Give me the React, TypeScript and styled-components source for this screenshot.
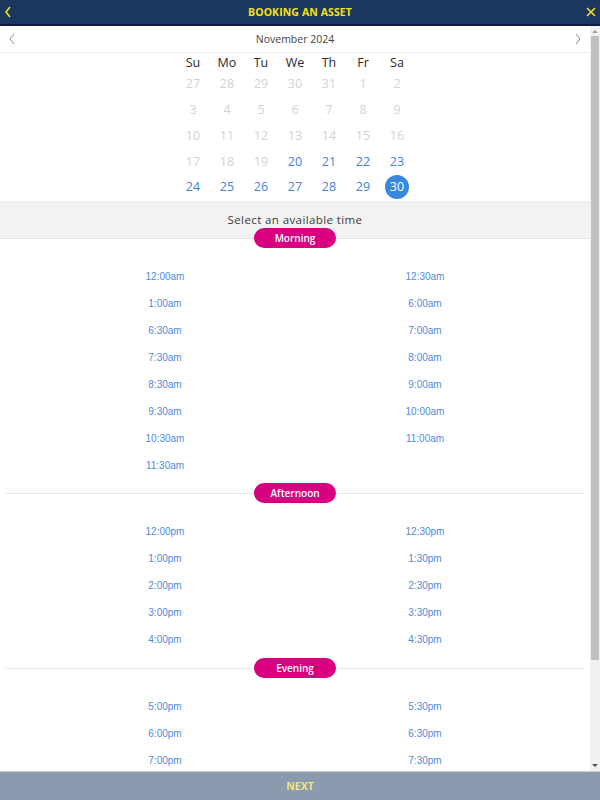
import styled, { createGlobalStyle } from "styled-components";

const GlobalStyle = createGlobalStyle`
  html, body {
    margin: 0;
    padding: 0;
    height: 100%;
  }
  body {
    font-family: "Open Sans", sans-serif;
    background: #ffffff;
  }
  #root {
    height: 100%;
  }
`;

const Page = styled.div`
  height: 100vh;
  display: flex;
  flex-direction: column;
  overflow: hidden;
`;

const Header = styled.div`
  height: 24px;
  flex-shrink: 0;
  background: #1b365f;
  border-bottom: 2px solid #0c1a48;
  display: grid;
  grid-template-columns: 24px 1fr 24px;
  align-items: center;
  padding: 0 4px;
`;

const HeaderTitle = styled.div`
  text-align: center;
  color: #f5e21c;
  font-weight: 700;
  font-size: 10.5px;
  letter-spacing: 0.1px;
`;

const IconButton = styled.div<{ $align?: string }>`
  display: flex;
  align-items: center;
  justify-content: ${(p) => p.$align || "flex-start"};
  height: 100%;
`;

const Main = styled.div`
  flex: 1;
  min-height: 0;
  display: flex;
`;

const Body = styled.div`
  flex: 1;
  overflow-y: auto;
  scrollbar-width: none;
`;

const ScrollTrack = styled.div`
  width: 10px;
  flex-shrink: 0;
  background: #f1f1f1;
  display: flex;
  flex-direction: column;
`;

const ScrollButton = styled.div`
  height: 10px;
  display: flex;
  align-items: center;
  justify-content: center;
`;

const ScrollRail = styled.div`
  flex: 1;
  display: flex;
  flex-direction: column;
`;

const ScrollThumb = styled.div`
  height: 86%;
  margin: 0 1px;
  background: #c1c1c1;
`;

const MonthBar = styled.div`
  height: 26px;
  border-bottom: 1px solid #eceff0;
  display: flex;
  align-items: center;
  justify-content: space-between;
  padding: 0 8px;
`;

const MonthLabel = styled.div`
  font-size: 10.5px;
  color: #444444;
`;

const CalendarGrid = styled.div`
  width: 238px;
  margin: 0 auto;
  padding-bottom: 1px;
  display: grid;
  grid-template-columns: repeat(7, 34px);
  grid-template-rows: 18px repeat(5, 25.75px);
  align-items: center;
  justify-items: center;
`;

const DayName = styled.div`
  font-size: 12.5px;
  color: #2a2a2a;
`;

const DayCell = styled.div<{ $state: "off" | "on" | "selected" }>`
  width: 24px;
  height: 24px;
  border-radius: 50%;
  display: flex;
  align-items: center;
  justify-content: center;
  font-size: 12.5px;
  color: ${(p) =>
    p.$state === "off" ? "#cfd3d7" : p.$state === "on" ? "#4282d8" : "#ffffff"};
  background: ${(p) => (p.$state === "selected" ? "#3a87e0" : "transparent")};
`;

const Band = styled.div`
  height: 37px;
  background: #f2f2f2;
  border-bottom: 1px solid #e3e3e3;
  display: flex;
  align-items: center;
  justify-content: center;
  font-size: 11.5px;
  letter-spacing: 0.4px;
  color: #3a3a3a;
`;

const PillRow = styled.div`
  position: relative;
  margin-top: -11px;
  height: 20px;
  display: flex;
  justify-content: center;
`;

const Divider = styled.div`
  position: relative;
  height: 20px;
  display: flex;
  justify-content: center;
  &::before {
    content: "";
    position: absolute;
    left: 6px;
    right: 6px;
    top: 50%;
    height: 1px;
    background: #e6e9ec;
  }
`;

const Pill = styled.div`
  position: relative;
  z-index: 1;
  width: 82px;
  height: 20px;
  border-radius: 10px;
  background: #d9007f;
  color: #ffffff;
  font-size: 10px;
  font-weight: 600;
  display: flex;
  align-items: center;
  justify-content: center;
`;

const TimeGrid = styled.div`
  display: grid;
  grid-template-columns: 1fr 1fr;
  grid-auto-rows: 27px;
  padding: 15px 35px 4.5px;
  align-items: center;
  justify-items: center;
`;

const TimeSlot = styled.div`
  font-family: "Liberation Sans", Arial, sans-serif;
  font-size: 10px;
  color: #4f8adf;
  cursor: pointer;
`;

const Footer = styled.div`
  height: 28px;
  flex-shrink: 0;
  background: #8a9bb0;
  border-top: 1px solid #c9d0d9;
  display: flex;
  align-items: center;
  justify-content: center;
  color: #f3e57a;
  font-weight: 700;
  font-size: 10.5px;
`;

const Chevron = ({ dir, color, w = 1.4 }: { dir: "left" | "right"; color: string; w?: number }) => (
  <svg width="8" height="12" viewBox="0 0 8 12">
    <path
      d={dir === "left" ? "M6 1 L2 6 L6 11" : "M2 1 L6 6 L2 11"}
      fill="none"
      stroke={color}
      strokeWidth={w}
    />
  </svg>
);

const CloseIcon = () => (
  <svg width="10" height="10" viewBox="0 0 10 10">
    <path d="M1 1 L9 9 M9 1 L1 9" stroke="#f5e21c" strokeWidth="1.6" />
  </svg>
);

const Arrow = ({ up }: { up?: boolean }) => (
  <svg width="6" height="4" viewBox="0 0 6 4">
    <path d={up ? "M0 4 L3 1 L6 4 Z" : "M0 0 L6 0 L3 3 Z"} fill={up ? "#a3a3a3" : "#505050"} />
  </svg>
);

const dayNames = ["Su", "Mo", "Tu", "We", "Th", "Fr", "Sa"];

const days: { n: number; state: "off" | "on" | "selected" }[] = [
  ...[27, 28, 29, 30, 31].map((n) => ({ n, state: "off" as const })),
  ...Array.from({ length: 30 }, (_, i) => {
    const n = i + 1;
    const state: "off" | "on" | "selected" = n === 30 ? "selected" : n >= 20 ? "on" : "off";
    return { n, state };
  }),
];

const morning = [
  "12:00am", "12:30am", "1:00am", "6:00am", "6:30am", "7:00am", "7:30am", "8:00am",
  "8:30am", "9:00am", "9:30am", "10:00am", "10:30am", "11:00am", "11:30am",
];

const afternoon = [
  "12:00pm", "12:30pm", "1:00pm", "1:30pm", "2:00pm", "2:30pm", "3:00pm", "3:30pm",
  "4:00pm", "4:30pm",
];

const evening = [
  "5:00pm", "5:30pm", "6:00pm", "6:30pm", "7:00pm", "7:30pm", "8:00pm", "8:30pm",
  "9:00pm", "9:30pm", "10:00pm", "10:30pm", "11:00pm", "11:30pm",
];

const Times = ({ items }: { items: string[] }) => (
  <TimeGrid>
    {items.map((t) => (
      <TimeSlot key={t}>{t}</TimeSlot>
    ))}
  </TimeGrid>
);

export default function App() {
  return (
    <Page>
      <GlobalStyle />
      <Header>
        <IconButton>
          <Chevron dir="left" color="#f5e21c" w={1.6} />
        </IconButton>
        <HeaderTitle>BOOKING AN ASSET</HeaderTitle>
        <IconButton $align="flex-end">
          <CloseIcon />
        </IconButton>
      </Header>
      <Main>
        <Body>
          <MonthBar>
            <Chevron dir="left" color="#8a8a8a" w={1} />
            <MonthLabel>November 2024</MonthLabel>
            <Chevron dir="right" color="#8a8a8a" w={1} />
          </MonthBar>
          <CalendarGrid>
            {dayNames.map((d) => (
              <DayName key={d}>{d}</DayName>
            ))}
            {days.map((d, i) => (
              <DayCell key={i} $state={d.state}>
                {d.n}
              </DayCell>
            ))}
          </CalendarGrid>
          <Band>Select an available time</Band>
          <PillRow>
            <Pill>Morning</Pill>
          </PillRow>
          <Times items={morning} />
          <Divider>
            <Pill>Afternoon</Pill>
          </Divider>
          <Times items={afternoon} />
          <Divider>
            <Pill>Evening</Pill>
          </Divider>
          <Times items={evening} />
        </Body>
        <ScrollTrack>
          <ScrollButton>
            <Arrow up />
          </ScrollButton>
          <ScrollRail>
            <ScrollThumb />
          </ScrollRail>
          <ScrollButton>
            <Arrow />
          </ScrollButton>
        </ScrollTrack>
      </Main>
      <Footer>NEXT</Footer>
    </Page>
  );
}
